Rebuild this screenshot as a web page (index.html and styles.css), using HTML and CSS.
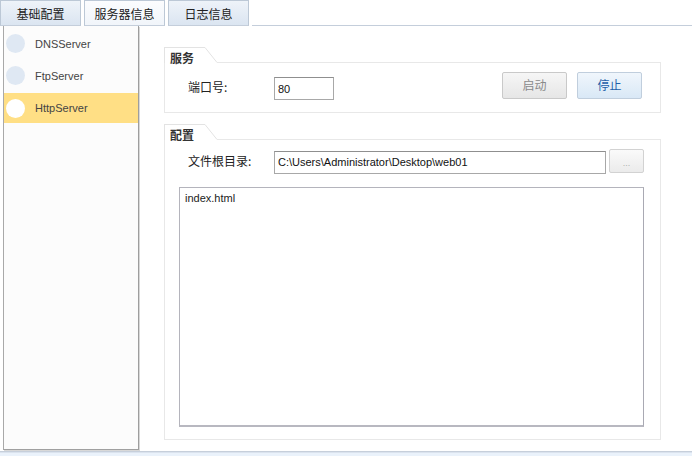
FILE: index.html
```html
<!DOCTYPE html>
<html>
<head>
<meta charset="utf-8">
<link rel="stylesheet" href="styles.css">
</head>
<body>
<div class="app">
  <div class="tabs">
    <div class="tab">基础配置</div>
    <div class="tab active">服务器信息</div>
    <div class="tab">日志信息</div>
    <div class="tab-fill"></div>
  </div>
  <div class="main">
    <div class="list">
      <div class="item"><span class="dot"></span><span class="name">DNSServer</span></div>
      <div class="item"><span class="dot"></span><span class="name">FtpServer</span></div>
      <div class="item selected"><span class="dot"></span><span class="name">HttpServer</span></div>
    </div>
    <div class="content">
      <div class="group g1">
        <div class="gtitle">
          <div class="glabel">服务</div>
          <svg class="slant" width="12" height="16" viewBox="0 0 12 16"><line x1="0" y1="0.5" x2="12" y2="15.5" stroke="#e3e3e3" stroke-width="1"/></svg>
          <div class="gfill"></div>
        </div>
        <div class="gbody row1">
          <div class="label">端口号:</div>
          <div class="input port">80</div>
          <div class="spacer"></div>
          <div class="btn disabled">启动</div>
          <div class="btn primary">停止</div>
        </div>
      </div>
      <div class="group g2">
        <div class="gtitle">
          <div class="glabel">配置</div>
          <svg class="slant" width="12" height="16" viewBox="0 0 12 16"><line x1="0" y1="0.5" x2="12" y2="15.5" stroke="#e3e3e3" stroke-width="1"/></svg>
          <div class="gfill"></div>
        </div>
        <div class="gbody body2">
          <div class="row2">
            <div class="label">文件根目录:</div>
            <div class="input path">C:\Users\Administrator\Desktop\web01</div>
            <div class="btn small">...</div>
          </div>
          <div class="textarea">index.html</div>
        </div>
      </div>
    </div>
  </div>
  <div class="bottom"></div>
</div>
</body>
</html>
```
FILE: styles.css
```css
* { box-sizing: border-box; }
html, body { margin: 0; padding: 0; background: #ffffff; }
body {
  font-family: "Liberation Sans", "Noto Sans CJK SC", sans-serif;
  font-size: 12px;
  color: #1a1a1a;
}
.app { width: 692px; height: 456px; display: flex; flex-direction: column; overflow: hidden; }

.tabs { height: 26px; display: flex; align-items: flex-end; gap: 3px; }
.tab {
  width: 81px; height: 26px;
  border: 1px solid #bcc8d6;
  border-bottom-color: #c4cedb;
  background: linear-gradient(#eef3f9, #dbe5f1);
  display: flex; align-items: center; justify-content: center;
  font-family: "Noto Sans CJK SC", sans-serif;
  font-size: 12px; line-height: 14px; color: #222;
  padding-top: 1px;
}
.tab.active { background: linear-gradient(#fbfcfe, #f1f5fa); }
.tab-fill { flex: 1; height: 1px; background: #c4cedb; }

.main { height: 426px; display: flex; border-bottom: 1px solid #c6cfdb; }
.list {
  margin-left: 3px; width: 136px; height: 424px;
  border: 1px solid #a9a9a9;
  border-top: none;
  border-right-color: #9e9e9e;
  border-bottom-color: #a0a0a0;
  background: #fcfcfc;
  padding-top: 3px;
  display: flex; flex-direction: column; gap: 3px;
  box-shadow: 1px 1px 0 #d8d8d8;
}
.item { height: 29px; display: flex; align-items: center; padding-left: 2px; }
.item.selected { height: 30px; margin-top: 0; background: #ffdf85; }
.dot { width: 19px; height: 19px; border-radius: 50%; background: #dfe8f3; flex: none; }
.selected .dot { background: #ffffff; }
.name { margin-left: 10px; font-size: 11px; color: #444; }

.content { flex: 1; padding: 21px 0 0 25px; display: flex; flex-direction: column; gap: 11px; }
.group { width: 497px; display: flex; flex-direction: column; }
.gtitle { height: 16px; display: flex; }
.glabel {
  width: 41px; height: 16px;
  border-left: 1px solid #e3e3e3; border-top: 1px solid #e3e3e3;
  font-family: "Noto Sans CJK SC", sans-serif; font-weight: bold;
  font-size: 12px; line-height: 14px; color: #333; padding-left: 5px; padding-top: 3px;
}
.slant { flex: none; display: block; }
.gfill { flex: 1; border-bottom: 1px solid #e8e8e8; }
.gbody { border: 1px solid #e8e8e8; border-top: none; }
.row1 { height: 50px; display: flex; align-items: center; padding-left: 23px; padding-bottom: 1px; }
.label { font-family: "Noto Sans CJK SC", sans-serif; font-size: 12px; line-height: 14px; color: #222; width: 86px; }
.input {
  border: 1px solid #a8a8a8; border-top-color: #8f8f8f; background: #fff;
  font-size: 11px; line-height: 14px; color: #111; padding: 3px 0 0 3px;
}
.port { width: 60px; height: 23px; margin-top: 2px; padding-top: 4px; }
.spacer { flex: 1; }
.btn {
  height: 27px; width: 65px;
  border: 1px solid #c9c9c9; border-radius: 2px;
  display: flex; align-items: center; justify-content: center;
  font-family: "Noto Sans CJK SC", sans-serif; font-size: 12px; line-height: 14px;
}
.btn.disabled { background: linear-gradient(#f6f6f6, #e6e6e6); color: #8a8a8a; margin-right: 10px; margin-top: -4px; }
.btn.primary { background: linear-gradient(#f0f6fc, #d9e8f6); color: #1f5fa8; border-color: #c0cedd; margin-right: 18px; margin-top: -4px; }
.body2 { height: 300px; padding: 9px 16px 0 14px; display: flex; flex-direction: column; }
.row2 { display: flex; align-items: center; padding-left: 9px; height: 24px; }
.path { width: 332px; height: 23px; margin-top: 2px; }
.btn.small { width: 35px; height: 24px; margin-left: 3px; font-family: "Liberation Sans", sans-serif; font-size: 9px; color: #b0b0b0; background: linear-gradient(#fafafa, #ebebeb); border-color: #d2d2d2; padding-top: 3px; }
.textarea {
  margin-top: 14px; width: 465px; height: 240px;
  border: 1px solid #b4b4bc; border-right-color: #a9a9b3; border-bottom: 2px solid #b8b8c0;
  font-size: 11px; line-height: 14px; padding: 3px 0 0 5px; color: #222;
}
.bottom { flex: 1; background: #eaf2fb; border-top: 1px solid #dbe3ee; }
```
